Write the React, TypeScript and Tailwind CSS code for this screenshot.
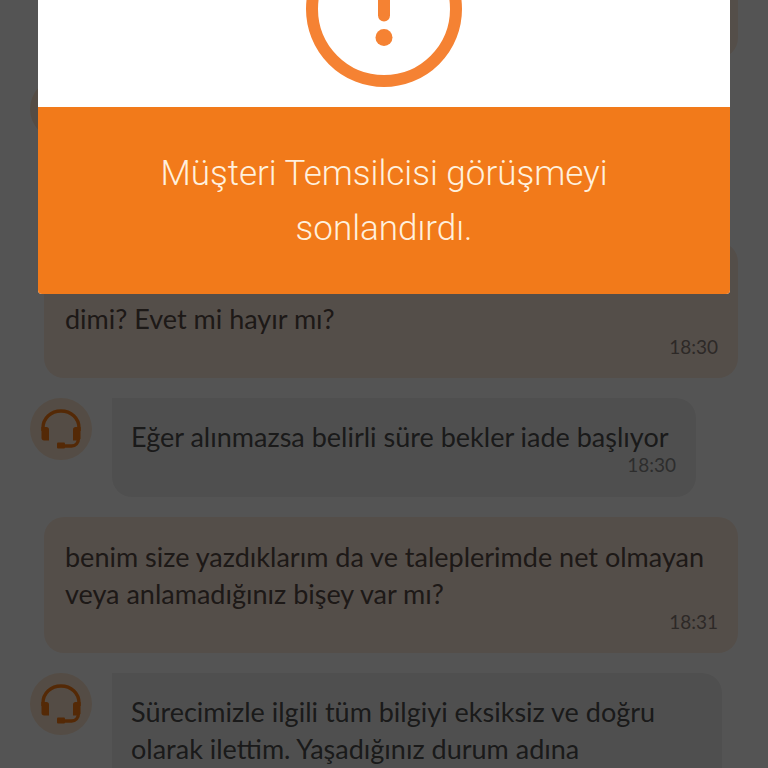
import type { ReactNode } from 'react';

const HeadsetIcon = () => (
    <svg viewBox="0 0 40 40" className="h-10 w-10" fill="none" aria-hidden="true">
        <path d="M2 22v-3C2 9 10 2 20 2s18 7 18 17v3" stroke="#ff7d14" strokeWidth="3.4" />
        <path d="M0.500 18h5c1.500 0 2.500 1 2.500 2.500V31.500H3c-1.500 0-2.500-1-2.500-2.500z" fill="#ff7d14" />
        <path d="M39.500 18h-5c-1.500 0-2.500 1-2.500 2.500V31.500h5c1.500 0 2.500-1 2.500-2.500z" fill="#ff7d14" />
        <path d="M37.500 29c0 5-3 8-7 8H18" stroke="#ff7d14" strokeWidth="3.4" />
        <rect x="16" y="33.500" width="8" height="6" rx="1" fill="#ff7d14" />
    </svg>
);

function CustomerMessage({ time, children }: { time: string; children?: ReactNode }) {
    return (
        <div className="ml-11 mr-[30px] rounded-[20px] bg-[#ffebdd] py-[21px] pl-[21px] pr-5">
            <p className="min-h-[74px] text-[27px] leading-[37px] text-[#5a4c47]">{children}</p>
            <p className="text-right text-[19px] leading-[20px] text-[#8a7d78]">{time}</p>
        </div>
    );
}

function AgentMessage({ time, children }: { time?: string; children?: ReactNode }) {
    return (
        <div className="ml-[30px] mr-[46px] flex items-start gap-5">
            <div className="flex h-[62px] w-[62px] shrink-0 items-center justify-center rounded-full bg-[#ffe6d0]">
                <HeadsetIcon />
            </div>
            <div className="min-h-[99px] min-w-[584px] rounded-[20px] rounded-tl-none bg-[#f0f0f0] py-5 pl-[19px] pr-5">
                <p className="text-[27px] leading-[37px] text-[#505050]">{children}</p>
                {time && <p className="text-right text-[19px] leading-[20px] text-[#8a8a8a]">{time}</p>}
            </div>
        </div>
    );
}

export default function App() {
    return (
        <div className="relative h-screen overflow-hidden bg-white font-['Lato',sans-serif]">
            <main className="flex flex-col gap-5">
                <div className="ml-11 mr-[30px] h-[58px] rounded-b-[20px] bg-[#ffebdd]" />
                <div className="h-36">
                    <AgentMessage />
                </div>
                <CustomerMessage time="18:30">
                    <br />
                    dimi? Evet mi hayır mı?
                </CustomerMessage>
                <AgentMessage time="18:30">Eğer alınmazsa belirli süre bekler iade başlıyor</AgentMessage>
                <CustomerMessage time="18:31">
                    benim size yazdıklarım da ve taleplerimde net olmayan veya anlamadığınız bişey var mı?
                </CustomerMessage>
                <AgentMessage>
                    Sürecimizle ilgili tüm bilgiyi eksiksiz ve doğru olarak ilettim. Yaşadığınız durum adına
                </AgentMessage>
            </main>

            {/* Conversation ended dialog */}
            <div className="absolute inset-0 bg-black/67">
                <div
                    role="alertdialog"
                    aria-labelledby="ended-title"
                    className="mx-auto w-[90%] overflow-hidden rounded-b bg-white"
                >
                    <div className="flex justify-center pb-5">
                        <svg viewBox="0 69 156 87" className="h-[87px] w-[156px]" fill="none" aria-hidden="true">
                            <circle cx="78" cy="78" r="72" stroke="#f58233" strokeWidth="12" />
                            <path d="M78 40v44.500" stroke="#f58233" strokeWidth="12" strokeLinecap="round" />
                            <circle cx="78" cy="106.500" r="8.500" fill="#f58233" />
                        </svg>
                    </div>
                    <div className="bg-[#f27a1a] px-20 pb-[38px] pt-[39px]">
                        <h1
                            id="ended-title"
                            className="text-center font-['Roboto',sans-serif] text-[35px] font-light leading-[55px] text-[#fff0dd]"
                        >
                            Müşteri Temsilcisi görüşmeyi sonlandırdı.
                        </h1>
                    </div>
                </div>
            </div>
        </div>
    );
}
